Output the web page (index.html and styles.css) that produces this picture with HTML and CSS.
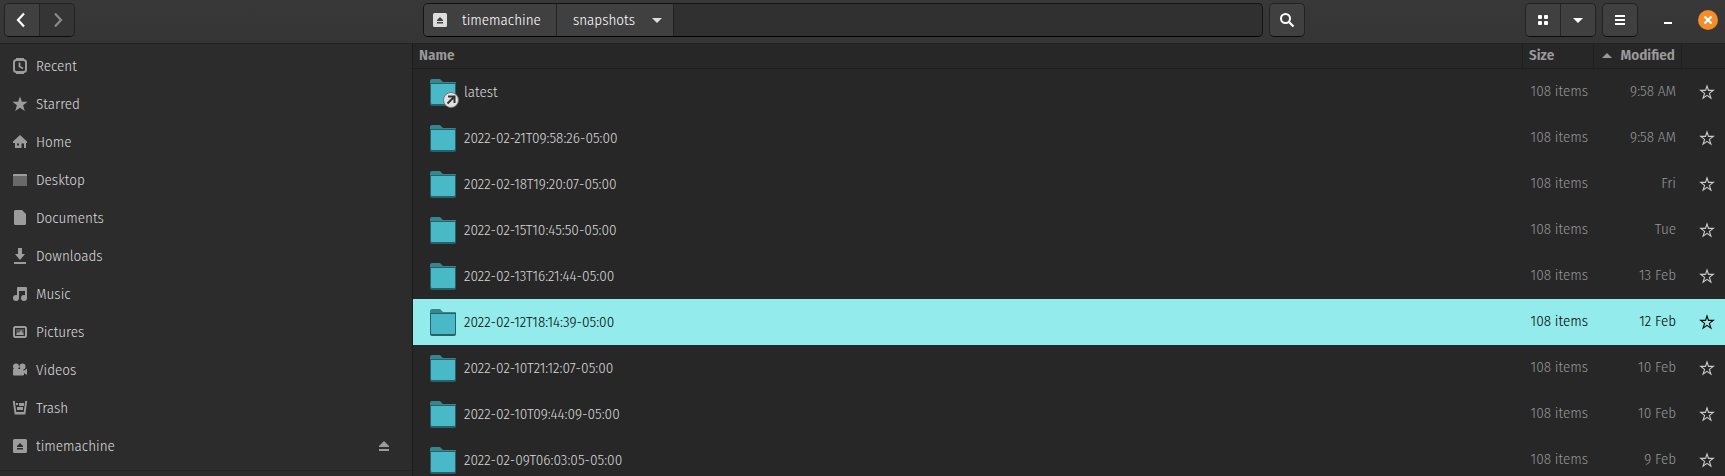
FILE: index.html
```html
<!DOCTYPE html>
<html lang="en">
<head>
    <meta charset="UTF-8">
    <meta name="viewport" content="width=device-width, initial-scale=1.0">
    <title>snapshots</title>
    <link rel="stylesheet" href="styles.css">
</head>
<body>
    <!-- Shared icons -->
    <svg class="sprite" aria-hidden="true">
        <symbol id="folder" viewBox="0 0 26 27">
            <path d="M0 2a2 2 0 0 1 2-2h8l3 3h12a1 1 0 0 1 1 1v10H0z" fill="#35868f"/>
            <path d="M0 4h26v21a2 2 0 0 1-2 2H2a2 2 0 0 1-2-2z" fill="#2a6169"/>
            <path d="M1 5h24v19a1 1 0 0 1-1 1H2a1 1 0 0 1-1-1z" fill="#49b9c8"/>
        </symbol>
        <symbol id="star" viewBox="0 0 16 16">
            <path d="M8 2l1.500 4.400h4.800l-3.900 3 1.500 4.800L8 11.400l-3.900 2.800 1.500-4.800-3.900-3h4.800z" fill="none" stroke="currentColor" stroke-width="1.100"/>
        </symbol>
        <symbol id="drive" viewBox="0 0 16 16">
            <path fill-rule="evenodd" d="M2.500 1h11A1.500 1.500 0 0 1 15 2.500v11a1.500 1.500 0 0 1-1.500 1.500h-11A1.500 1.500 0 0 1 1 13.500v-11A1.500 1.500 0 0 1 2.500 1zM8 5L5 8v1h6V8zM5 10v1.500h6V10z" fill="currentColor"/>
        </symbol>
    </svg>

    <header class="headerbar">
        <div class="header-start">
            <div class="linked">
                <button class="btn" aria-label="Back"><svg class="icon" viewBox="0 0 16 16"><path d="M10 1.500L4 8l6 6.500" fill="none" stroke="currentColor" stroke-width="2.200"/></svg></button>
                <button class="btn" aria-label="Forward" disabled><svg class="icon" viewBox="0 0 16 16"><path d="M6 1.500L12 8l-6 6.500" fill="none" stroke="currentColor" stroke-width="2.200"/></svg></button>
            </div>
        </div>
        <div class="header-center">
            <nav class="pathbar">
                <button class="crumb"><svg class="icon"><use href="#drive"/></svg>timemachine</button>
                <button class="crumb crumb-current">snapshots<svg class="icon" viewBox="0 0 16 16"><path d="M3 6h10l-5 5z" fill="currentColor"/></svg></button>
            </nav>
            <button class="btn single" aria-label="Search"><svg class="icon" viewBox="0 0 16 16"><circle cx="6.500" cy="6.500" r="4.500" fill="none" stroke="currentColor" stroke-width="2"/><path d="M9.500 9.500l5 5" stroke="currentColor" stroke-width="2.200"/></svg></button>
        </div>
        <div class="header-end">
            <div class="linked">
                <button class="btn" aria-label="Grid view"><svg class="icon" viewBox="0 0 16 16" fill="currentColor"><rect x="3" y="3" width="4" height="4" rx="1"/><rect x="9" y="3" width="4" height="4" rx="1"/><rect x="3" y="9" width="4" height="4" rx="1"/><rect x="9" y="9" width="4" height="4" rx="1"/></svg></button>
                <button class="btn" aria-label="View options"><svg class="icon" viewBox="0 0 16 16"><path d="M3 6h10l-5 5z" fill="currentColor"/></svg></button>
            </div>
            <button class="btn single" aria-label="Menu"><svg class="icon" viewBox="0 0 16 16" fill="currentColor"><path d="M3 3h10v2H3zM3 7h10v2H3zM3 11h10v2H3z"/></svg></button>
            <div class="window-controls">
                <button class="minimize" aria-label="Minimize"><svg class="icon" viewBox="0 0 16 16"><path d="M4 10h8v2H4z" fill="currentColor"/></svg></button>
                <button class="close" aria-label="Close"><svg class="icon" viewBox="0 0 16 16"><path d="M4.500 4.500l7 7M11.500 4.500l-7 7" stroke="#fff" stroke-width="2.400"/></svg></button>
            </div>
        </div>
    </header>

    <main class="content">
        <aside class="sidebar">
            <nav class="places">
                <a class="place" href="#"><svg class="icon" viewBox="0 0 16 16"><rect x="2" y="2" width="12" height="12" rx="2.500" fill="none" stroke="currentColor" stroke-width="2"/><path d="M4 0h8v2H4zM4 14h8v2H4z" fill="currentColor"/><path d="M7.500 4.500v4l3.500 2" fill="none" stroke="currentColor" stroke-width="1.800"/></svg>Recent</a>
                <a class="place" href="#"><svg class="icon" viewBox="0 0 16 16"><path d="M8 .5l1.900 5.200h5.600L11.100 9.200l1.700 5.800L8 11.700 3.200 15l1.700-5.800L.5 5.700h5.600z" fill="currentColor"/></svg>Starred</a>
                <a class="place" href="#"><svg class="icon" viewBox="0 0 16 16"><path fill-rule="evenodd" d="M8 1l7 6.500V9h-1v5h-2V9.500H9.500V14H3V9H1V7.500zM5 9.500v2h2v-2z" fill="currentColor"/></svg>Home</a>
                <a class="place" href="#"><svg class="icon" viewBox="0 0 16 16"><path d="M1 4h14v10H1z" fill="#696969"/><path d="M1 3a1 1 0 0 1 1-1h12a1 1 0 0 1 1 1v1H1z" fill="currentColor"/></svg>Desktop</a>
                <a class="place" href="#"><svg class="icon" viewBox="0 0 16 16"><path d="M3.500 0H10l4 4v9.500a1.500 1.500 0 0 1-1.500 1.500h-9A1.500 1.500 0 0 1 2 13.500v-12A1.500 1.500 0 0 1 3.500 0z" fill="currentColor"/></svg>Documents</a>
                <a class="place" href="#"><svg class="icon" viewBox="0 0 16 16"><path d="M6 0h4v6h3l-5 6-5-6h3zM2 14h12v2H2z" fill="currentColor"/></svg>Downloads</a>
                <a class="place" href="#"><svg class="icon" viewBox="0 0 16 16"><path d="M6 1h8a1 1 0 0 1 1 1v10H13V5H7v7H5V2a1 1 0 0 1 1-1z" fill="currentColor"/><circle cx="4" cy="12" r="3" fill="currentColor"/><circle cx="12" cy="12" r="3" fill="currentColor"/></svg>Music</a>
                <a class="place" href="#"><svg class="icon" viewBox="0 0 16 16"><rect x="2" y="3" width="12" height="10" rx="1.500" fill="none" stroke="currentColor" stroke-width="2"/><path d="M4 5h8v6H4z" fill="#555"/><path d="M4 11l2-3 1 1 2-3 3 5z" fill="currentColor"/></svg>Pictures</a>
                <a class="place" href="#"><svg class="icon" viewBox="0 0 16 16" fill="currentColor"><circle cx="4" cy="4.500" r="3"/><circle cx="10.500" cy="4.500" r="3"/><path d="M2 7h9.500v2L15 6.500v6.500l-3-2v1.500a1 1 0 0 1-1 1H2a1 1 0 0 1-1-1V8a1 1 0 0 1 1-1z"/></svg>Videos</a>
                <a class="place" href="#"><svg class="icon" viewBox="0 0 16 16"><path d="M1.800 1L3.500 13.500h9L14.200 1" fill="none" stroke="currentColor" stroke-width="1.900"/><path d="M4 3h2v2H4zM7 3h5v3H7zM5 7h6v3H5zM4 12h8v2H4z" fill="currentColor"/></svg>Trash</a>
                <a class="place" href="#"><svg class="icon"><use href="#drive"/></svg>timemachine<svg class="icon eject" viewBox="0 0 16 16"><path d="M8 3L3 8v1h10V8zM3 11h10v2H3z" fill="currentColor"/></svg></a>
            </nav>
        </aside>

        <section class="files">
            <table class="file-table">
                <thead>
                    <tr>
                        <th>Name</th>
                        <th class="col-size">Size</th>
                        <th class="col-modified"><svg class="sort" viewBox="0 0 10 5"><path d="M0 5l5-5 5 5z" fill="currentColor"/></svg>Modified</th>
                        <th class="col-star"></th>
                    </tr>
                </thead>
                <tbody>
                    <tr>
                        <td><div class="name"><span class="folder-link"><svg class="folder"><use href="#folder"/></svg><svg class="emblem" viewBox="0 0 16 16"><circle cx="8" cy="8" r="7.500" fill="#e2e2e2" stroke="#777"/><path d="M5 4.500h6.500V11M11 5l-6.500 6.500" fill="none" stroke="#333" stroke-width="2"/></svg></span>latest</div></td>
                        <td>108 items</td><td>9:58 AM</td>
                        <td><button class="star" aria-label="Star"><svg class="icon"><use href="#star"/></svg></button></td>
                    </tr>
                    <tr>
                        <td><div class="name"><svg class="folder"><use href="#folder"/></svg>2022-02-21T09:58:26-05:00</div></td>
                        <td>108 items</td><td>9:58 AM</td>
                        <td><button class="star" aria-label="Star"><svg class="icon"><use href="#star"/></svg></button></td>
                    </tr>
                    <tr>
                        <td><div class="name"><svg class="folder"><use href="#folder"/></svg>2022-02-18T19:20:07-05:00</div></td>
                        <td>108 items</td><td>Fri</td>
                        <td><button class="star" aria-label="Star"><svg class="icon"><use href="#star"/></svg></button></td>
                    </tr>
                    <tr>
                        <td><div class="name"><svg class="folder"><use href="#folder"/></svg>2022-02-15T10:45:50-05:00</div></td>
                        <td>108 items</td><td>Tue</td>
                        <td><button class="star" aria-label="Star"><svg class="icon"><use href="#star"/></svg></button></td>
                    </tr>
                    <tr>
                        <td><div class="name"><svg class="folder"><use href="#folder"/></svg>2022-02-13T16:21:44-05:00</div></td>
                        <td>108 items</td><td>13 Feb</td>
                        <td><button class="star" aria-label="Star"><svg class="icon"><use href="#star"/></svg></button></td>
                    </tr>
                    <tr class="selected">
                        <td><div class="name"><svg class="folder"><use href="#folder"/></svg>2022-02-12T18:14:39-05:00</div></td>
                        <td>108 items</td><td>12 Feb</td>
                        <td><button class="star" aria-label="Star"><svg class="icon"><use href="#star"/></svg></button></td>
                    </tr>
                    <tr>
                        <td><div class="name"><svg class="folder"><use href="#folder"/></svg>2022-02-10T21:12:07-05:00</div></td>
                        <td>108 items</td><td>10 Feb</td>
                        <td><button class="star" aria-label="Star"><svg class="icon"><use href="#star"/></svg></button></td>
                    </tr>
                    <tr>
                        <td><div class="name"><svg class="folder"><use href="#folder"/></svg>2022-02-10T09:44:09-05:00</div></td>
                        <td>108 items</td><td>10 Feb</td>
                        <td><button class="star" aria-label="Star"><svg class="icon"><use href="#star"/></svg></button></td>
                    </tr>
                    <tr>
                        <td><div class="name"><svg class="folder"><use href="#folder"/></svg>2022-02-09T06:03:05-05:00</div></td>
                        <td>108 items</td><td>9 Feb</td>
                        <td><button class="star" aria-label="Star"><svg class="icon"><use href="#star"/></svg></button></td>
                    </tr>
                </tbody>
            </table>
        </section>
    </main>
</body>
</html>
```
FILE: styles.css
```css
* {
    box-sizing: border-box;
}

body {
    margin: 0;
    height: 100vh;
    display: flex;
    flex-direction: column;
    overflow: hidden;
    background-color: #272727;
    color: #d8d8d8;
    font-family: "Fira Sans Condensed", Roboto, sans-serif;
    font-size: 15px;
    font-weight: 350;
    line-height: 17px;
}

button {
    font: inherit;
    color: inherit;
    border: none;
    padding: 0;
    background: none;
    cursor: pointer;
}

.sprite {
    position: absolute;
    width: 0;
    height: 0;
}

.icon {
    width: 16px;
    height: 16px;
    flex: none;
    display: block;
}

/* Header bar */
.headerbar {
    display: flex;
    flex: none;
    height: 44px;
    padding-top: 3px;
    align-items: flex-start;
    background: linear-gradient(#383838, #353535);
    border-bottom: 1px solid #232323;
    color: #ffffff;
}

.header-start {
    flex: 0 0 423px;
    display: flex;
    padding-left: 4px;
}

.header-center {
    flex: 1;
    display: flex;
    gap: 6px;
}

.header-end {
    flex: 0 0 420px;
    display: flex;
    justify-content: flex-end;
    gap: 6px;
    padding-right: 7px;
}

.linked,
.single,
.pathbar {
    display: flex;
    height: 34px;
    border: 1px solid #222222;
    border-bottom-color: #0c0c0c;
    border-radius: 5px;
    overflow: hidden;
}

.btn {
    width: 34px;
    display: flex;
    align-items: center;
    justify-content: center;
    background-color: #404040;
}

.linked .btn + .btn {
    width: 35px;
    border-left: 1px solid #262626;
}

.btn:disabled {
    background-color: #353535;
    color: #8a8a8a;
}

.single {
    width: 36px;
}

.pathbar {
    flex: 1;
    border-color: #141414;
    border-bottom-color: #000000;
    background-color: #303030;
}

.crumb {
    display: flex;
    align-items: center;
    gap: 14px;
    padding: 0 15px 0 8px;
    background-color: #404040;
    border-right: 1px solid #222222;
}

.crumb .icon {
    color: #dddddd;
}

.crumb-current {
    padding: 0 8px 0 16px;
}

.window-controls {
    display: flex;
    align-items: center;
    height: 34px;
    gap: 22px;
    padding-left: 16px;
}

.close {
    width: 20px;
    height: 20px;
    padding: 2px;
    border-radius: 50%;
    background-color: #f48c2a;
}

/* Main area */
.content {
    flex: 1;
    min-height: 0;
    display: flex;
}

.sidebar {
    flex: 0 0 413px;
    background-color: #2c2c2c;
    border-right: 1px solid #1c1c1c;
}

.places {
    padding: 3px 0 5px;
    border-bottom: 1px solid #262626;
}

.place {
    display: flex;
    align-items: center;
    gap: 8px;
    height: 38px;
    padding: 0 20px 0 12px;
    color: inherit;
    text-decoration: none;
}

.place .icon {
    color: #9c9c9c;
}

.eject {
    margin-left: auto;
}

/* File list */
.files {
    flex: 1;
    min-width: 0;
    overflow: hidden;
}

.file-table {
    width: 100%;
    table-layout: fixed;
    border-collapse: separate;
    border-spacing: 0;
    white-space: nowrap;
}

th {
    height: 25px;
    padding: 0 6px 2px;
    text-align: left;
    font-weight: 600;
    color: #9a9a9a;
    border-bottom: 1px solid #1f1f1f;
    border-right: 1px solid #1f1f1f;
}

th:last-child {
    border-right: none;
}

.col-size {
    width: 71px;
}

.col-modified {
    width: 88px;
    text-align: right;
}

.col-star {
    width: 43px;
}

.sort {
    width: 10px;
    height: 5px;
    margin-right: 8px;
    vertical-align: middle;
}

td {
    height: 46px;
    padding: 0 6px 2px;
    text-align: right;
    color: #959595;
}

td:first-child {
    padding: 0 6px 0 17px;
    text-align: left;
    color: #d8d8d8;
}

td:last-child {
    padding-bottom: 0;
}

.name {
    display: flex;
    align-items: center;
    gap: 8px;
}

.folder {
    width: 26px;
    height: 27px;
    flex: none;
    display: block;
}

.folder-link {
    position: relative;
}

.emblem {
    position: absolute;
    right: -3px;
    bottom: -2px;
    width: 16px;
    height: 16px;
}

.star {
    display: block;
    margin-left: 11px;
    color: #cccccc;
}

.selected td,
.selected td:first-child,
.selected .star {
    color: #000000;
}

.selected td {
    background-color: #94ebeb;
}
```
